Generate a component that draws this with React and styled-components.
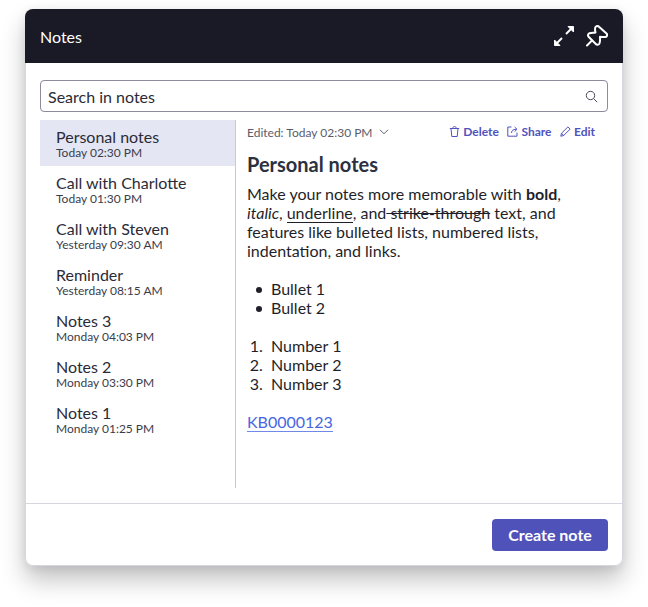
import styled, { createGlobalStyle } from 'styled-components'

const GlobalStyle = createGlobalStyle`
  html, body {
    margin: 0;
    padding: 0;
    background: #fff;
    font-family: Lato, "Open Sans", sans-serif;
  }
`

const Page = styled.div`
  width: 648px;
  height: 607px;
  padding: 9px 25px 0;
  box-sizing: border-box;
  overflow: hidden;
`

const Card = styled.div`
  width: 598px;
  height: 557px;
  display: flex;
  flex-direction: column;
  border-radius: 8px;
  background: #fff;
  box-shadow: inset 0 0 0 1px #d6d6de, 0 14px 24px rgba(0, 0, 0, 0.24), 0 2px 10px rgba(0, 0, 0, 0.08);
  overflow: hidden;
`

const Header = styled.header`
  height: 54px;
  flex: none;
  padding: 0 15px;
  display: flex;
  align-items: center;
  justify-content: space-between;
  background: #1a1a27;
  color: #fff;
`

const Title = styled.h1`
  margin: 0;
  font-size: 16px;
  font-weight: 400;
`

const HeaderIcons = styled.div`
  display: flex;
  align-items: center;
  gap: 11px;
`

const Body = styled.div`
  flex: 1;
  padding: 17px 15px 15px;
  display: flex;
  flex-direction: column;
  min-height: 0;
`

const SearchBox = styled.div`
  height: 32px;
  flex: none;
  box-sizing: border-box;
  border: 1px solid #8b8c9c;
  border-radius: 4px;
  padding: 0 9px 0 7px;
  display: flex;
  align-items: center;
  justify-content: space-between;
  font-size: 16px;
  color: #2b2b38;
`

const Columns = styled.div`
  margin-top: 8px;
  height: 368px;
  display: flex;
`

const NoteList = styled.ul`
  width: 196px;
  flex: none;
  margin: 0;
  padding: 0;
  list-style: none;
  box-sizing: border-box;
  border-right: 1px solid #c9cad4;
`

const NoteItem = styled.li`
  height: 46px;
  box-sizing: border-box;
  padding: 8px 16px 0;
  background: ${props => (props.$active ? '#e4e6f4' : 'transparent')};
  color: #2b2b38;
`

const NoteName = styled.div`
  font-size: 16px;
  line-height: 18px;
`

const NoteDate = styled.div`
  font-size: 12px;
  line-height: 14px;
  color: #3c3c4a;
`

const Detail = styled.section`
  flex: 1;
  padding: 0 13px 0 11px;
  min-width: 0;
`

const MetaRow = styled.div`
  height: 24px;
  display: flex;
  align-items: center;
  justify-content: space-between;
`

const Edited = styled.div`
  display: flex;
  align-items: center;
  gap: 6px;
  font-size: 12px;
  color: #5b5c6b;
`

const Actions = styled.div`
  display: flex;
  align-items: center;
  gap: 8.5px;
`

const Action = styled.a`
  display: flex;
  align-items: center;
  gap: 3px;
  font-size: 12px;
  line-height: 14px;
  padding-bottom: 1px;
  font-weight: 700;
  color: #5053bd;
`

const NoteTitle = styled.h2`
  margin: 8px 0 0;
  font-size: 20px;
  line-height: 24px;
  font-weight: 700;
  color: #2c3040;
`

const Para = styled.p`
  margin: 8px 0 0;
  font-size: 16px;
  line-height: 19px;
  color: #1f1f2a;
`

const Underlined = styled.span`
  border-bottom: 1px solid #1f1f2a;
`

const Struck = styled.span`
  text-decoration: line-through;
`

const BulletList = styled.ul`
  margin: 19px 0 0;
  padding: 0 0 0 24px;
  list-style: none;
  font-size: 16px;
  line-height: 19px;
  color: #1f1f2a;

  li::before {
    content: '';
    display: inline-block;
    width: 6px;
    height: 6px;
    margin: 0 9px 2px -15px;
    border-radius: 50%;
    background: #1f1f2a;
    vertical-align: middle;
  }
`

const NumberList = styled.ol`
  margin: 19px 0 0;
  padding: 0 0 0 24px;
  font-size: 16px;
  line-height: 19px;
  color: #1f1f2a;

  li::marker {
    content: counter(list-item) ".\\00a0\\00a0";
  }
`

const LinkRow = styled.div`
  margin-top: 19px;
  font-size: 16px;
  line-height: 19px;
`

const KbLink = styled.a`
  color: #4766e0;
  border-bottom: 1px solid #7089e6;
`

const Footer = styled.footer`
  height: 63px;
  flex: none;
  box-sizing: border-box;
  border-top: 1px solid #d6d6de;
  padding: 15px 15px 0;
  display: flex;
  justify-content: flex-end;
`

const CreateButton = styled.button`
  width: 116px;
  height: 32px;
  border: 0;
  border-radius: 4px;
  padding: 0 0 2px;
  background: #4f52b8;
  color: #fff;
  font-family: inherit;
  font-size: 16px;
  font-weight: 700;
`

const notes = [
  { name: 'Personal notes', date: 'Today 02:30 PM', active: true },
  { name: 'Call with Charlotte', date: 'Today 01:30 PM' },
  { name: 'Call with Steven', date: 'Yesterday 09:30 AM' },
  { name: 'Reminder', date: 'Yesterday 08:15 AM' },
  { name: 'Notes 3', date: 'Monday 04:03 PM' },
  { name: 'Notes 2', date: 'Monday 03:30 PM' },
  { name: 'Notes 1', date: 'Monday 01:25 PM' },
]

const ExpandIcon = () => (
  <svg width="22" height="22" viewBox="0 0 22 22" fill="#fff" stroke="#fff" strokeWidth="2">
    <path d="M1.5 20.5v-5.5l5.5 5.5z" strokeWidth="1" />
    <path d="M3 19l6-6" />
    <path d="M20.5 1.5v5.5l-5.5-5.5z" strokeWidth="1" />
    <path d="M19 3l-6 6" />
  </svg>
)

const PinIcon = () => (
  <svg width="22" height="22" viewBox="0 0 22 22" fill="none" stroke="#fff" strokeWidth="2" strokeLinejoin="round" strokeLinecap="round">
    <path d="M9.5 7.5C9 5.5 8.5 3.5 9.5 2c1-1.3 2.5-1.3 3.5-.3l7.5 6.8c1.2 1.2.5 3.2-1 3.5-1.8.3-3.8-.2-5.5-.2 0 1.7.5 4.7-.7 6.9-.8 1.3-2.6 1.3-3.5.3l-7-7c-1.3-1.3-1-3.2.7-3.8 2-.7 4.2-.2 6-.7z" />
    <path d="M6 15.5l-5 5" />
  </svg>
)

const SearchIcon = () => (
  <svg width="13" height="13" viewBox="0 0 13 13" fill="none" stroke="#4b4c5a" strokeWidth="1">
    <circle cx="5.5" cy="5.5" r="4.2" />
    <path d="M8.6 8.6L12.2 12.2" />
  </svg>
)

const ChevronIcon = () => (
  <svg width="10" height="6" viewBox="0 0 10 6" fill="none" stroke="#5b5c6b" strokeWidth="1">
    <path d="M1 .8l4 4 4-4" />
  </svg>
)

const TrashIcon = () => (
  <svg width="11" height="11" viewBox="0 0 11 11" fill="none" stroke="#5053bd" strokeWidth="1">
    <path d="M.8 2.5h9.4M2 2.5l.8 8h5.4l.8-8M3.7 2.5C3.7 1.3 4.4.6 5.5.6s1.8.7 1.8 1.9" />
  </svg>
)

const ShareIcon = () => (
  <svg width="11" height="11" viewBox="0 0 11 11" fill="none" stroke="#5053bd" strokeWidth="1">
    <path d="M4.5 1H.8v9.2H10V6.5" />
    <path d="M4.5 7C4.6 4.8 6 3.3 9 3.3M7.6 1l2.4 2.3-2.4 2.3" />
  </svg>
)

const PencilIcon = () => (
  <svg width="11" height="11" viewBox="0 0 11 11" fill="none" stroke="#5053bd" strokeWidth="1" strokeLinejoin="round">
    <path d="M.8 10.2l.7-3L7.9.9l2.2 2.2-6.4 6.4-2.9.7zM1.5 7.2l2.2 2.3" />
  </svg>
)

export default function App() {
  return (
    <Page>
      <GlobalStyle />
      <Card>
        <Header>
          <Title>Notes</Title>
          <HeaderIcons>
            <ExpandIcon />
            <PinIcon />
          </HeaderIcons>
        </Header>
        <Body>
          <SearchBox>
            Search in notes
            <SearchIcon />
          </SearchBox>
          <Columns>
            <NoteList>
              {notes.map(note => (
                <NoteItem key={note.name} $active={note.active}>
                  <NoteName>{note.name}</NoteName>
                  <NoteDate>{note.date}</NoteDate>
                </NoteItem>
              ))}
            </NoteList>
            <Detail>
              <MetaRow>
                <Edited>
                  Edited: Today 02:30 PM
                  <ChevronIcon />
                </Edited>
                <Actions>
                  <Action><TrashIcon />Delete</Action>
                  <Action><ShareIcon />Share</Action>
                  <Action><PencilIcon />Edit</Action>
                </Actions>
              </MetaRow>
              <NoteTitle>Personal notes</NoteTitle>
              <Para>
                Make your notes more memorable with <b>bold</b>, <i>italic</i>,{' '}
                <Underlined>underline</Underlined>, and<Struck> strike-through</Struck> text, and
                features like bulleted lists, numbered lists, indentation, and links.
              </Para>
              <BulletList>
                <li>Bullet 1</li>
                <li>Bullet 2</li>
              </BulletList>
              <NumberList>
                <li>Number 1</li>
                <li>Number 2</li>
                <li>Number 3</li>
              </NumberList>
              <LinkRow>
                <KbLink>KB0000123</KbLink>
              </LinkRow>
            </Detail>
          </Columns>
        </Body>
        <Footer>
          <CreateButton>Create note</CreateButton>
        </Footer>
      </Card>
    </Page>
  )
}
